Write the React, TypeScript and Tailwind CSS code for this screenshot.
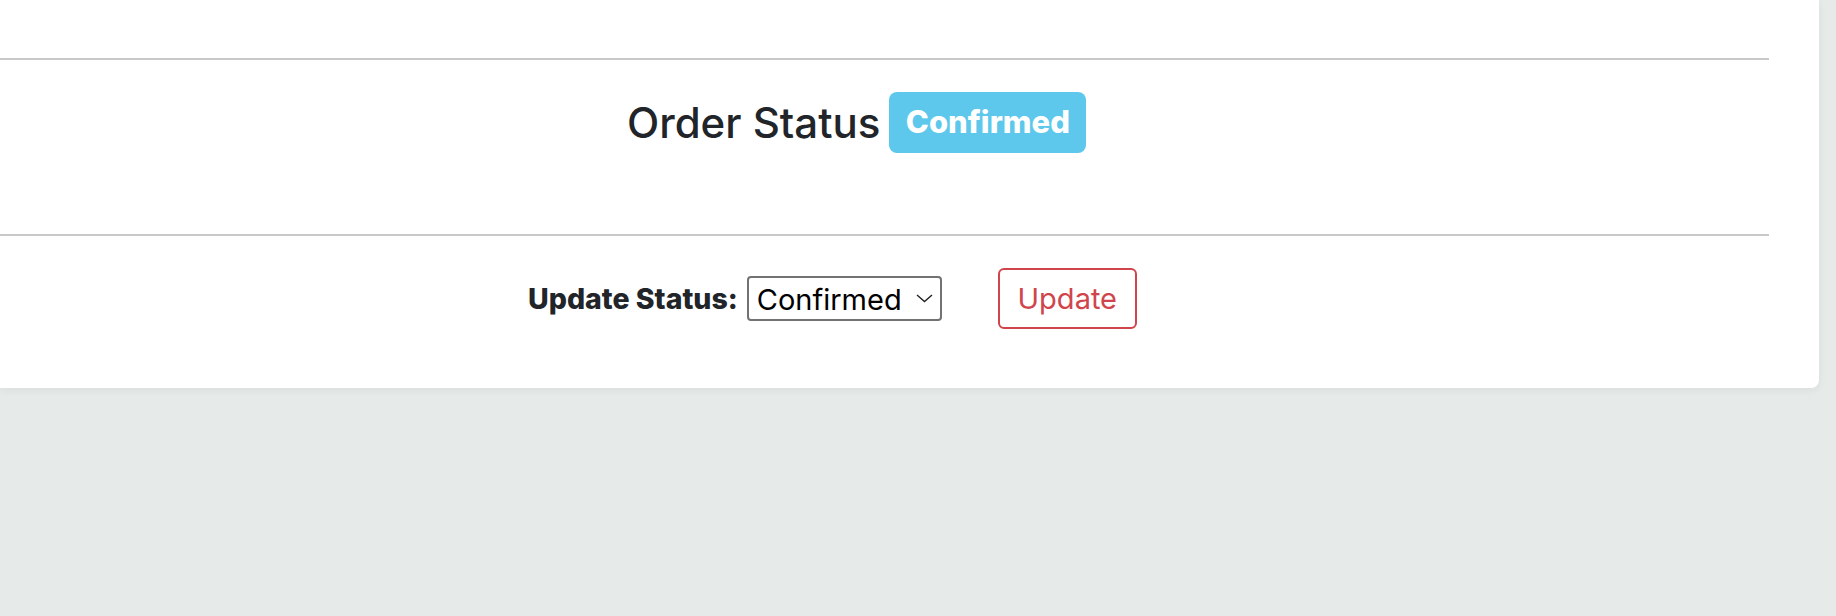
import React from "react";

export default function App() {
  const font = { fontFamily: "Inter, 'Noto Sans', sans-serif" };
  return (
    <div className="w-[1836px] h-[616px] bg-[#e6ebe9] overflow-hidden" style={font}>
      <div className="w-[1819px] h-[388px] bg-white rounded-br-[8px] shadow-[0_2px_8px_rgba(0,0,0,0.06)] pr-[50px] flex flex-col">
        <div className="h-[58px]" />
        <div className="h-[2px] bg-[#c8c8c8]" />
        <div className="h-[174px] pt-[32px] pl-[627px] flex items-start">
          <div className="flex items-center gap-[9px]">
            <span className="text-[42px] leading-none text-[#212529] font-medium">Order Status</span>
            <span className="h-[61px] w-[197px] rounded-[8px] bg-[#5ec8ec] text-white font-extrabold text-[31px] flex items-center justify-center">
              Confirmed
            </span>
          </div>
        </div>
        <div className="h-[2px] bg-[#c8c8c8]" />
        <div className="pt-[32px] pl-[528px] flex items-center">
          <span className="text-[28.5px] leading-none font-extrabold text-[#212529] pt-[2px]">Update Status:</span>
          <div className="ml-[9px] w-[195px] h-[45px] border-2 border-[#727272] rounded-[4px] flex items-center justify-between pl-[8px] pr-[7px] text-[29px] leading-none text-black">
            <span className="pt-[1px]">Confirmed</span>
            <svg width="17" height="9" viewBox="0 0 17 9" fill="none" stroke="#222" strokeWidth="1.4">
              <path d="M1 1l7.5 6.5L16 1" />
            </svg>
          </div>
          <div className="ml-[56px] w-[139px] h-[61px] border-2 border-[#d0454c] rounded-[6px] flex items-center justify-center text-[29px] leading-none text-[#d0454c] font-normal">
            Update
          </div>
        </div>
      </div>
    </div>
  );
}
